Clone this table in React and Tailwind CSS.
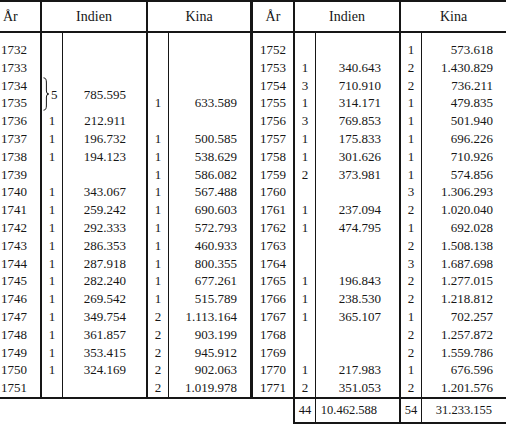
import React from "react";

// [year, indienCount, indienValue, kinaCount, kinaValue]
// null = cell covered by the brace row above
const left = [
  ["1732", "", "", "", ""],
  ["1733", "", "", "", ""],
  ["1734", "5", "785.595", "", ""],
  ["1735", null, null, "1", "633.589"],
  ["1736", "1", "212.911", "", ""],
  ["1737", "1", "196.732", "1", "500.585"],
  ["1738", "1", "194.123", "1", "538.629"],
  ["1739", "", "", "1", "586.082"],
  ["1740", "1", "343.067", "1", "567.488"],
  ["1741", "1", "259.242", "1", "690.603"],
  ["1742", "1", "292.333", "1", "572.793"],
  ["1743", "1", "286.353", "1", "460.933"],
  ["1744", "1", "287.918", "1", "800.355"],
  ["1745", "1", "282.240", "1", "677.261"],
  ["1746", "1", "269.542", "1", "515.789"],
  ["1747", "1", "349.754", "2", "1.113.164"],
  ["1748", "1", "361.857", "2", "903.199"],
  ["1749", "1", "353.415", "2", "945.912"],
  ["1750", "1", "324.169", "2", "902.063"],
  ["1751", "", "", "2", "1.019.978"],
];

const right = [
  ["1752", "", "", "1", "573.618"],
  ["1753", "1", "340.643", "2", "1.430.829"],
  ["1754", "3", "710.910", "2", "736.211"],
  ["1755", "1", "314.171", "1", "479.835"],
  ["1756", "3", "769.853", "1", "501.940"],
  ["1757", "1", "175.833", "1", "696.226"],
  ["1758", "1", "301.626", "1", "710.926"],
  ["1759", "2", "373.981", "1", "574.856"],
  ["1760", "", "", "3", "1.306.293"],
  ["1761", "1", "237.094", "2", "1.020.040"],
  ["1762", "1", "474.795", "1", "692.028"],
  ["1763", "", "", "2", "1.508.138"],
  ["1764", "", "", "3", "1.687.698"],
  ["1765", "1", "196.843", "2", "1.277.015"],
  ["1766", "1", "238.530", "2", "1.218.812"],
  ["1767", "1", "365.107", "1", "702.257"],
  ["1768", "", "", "2", "1.257.872"],
  ["1769", "", "", "2", "1.559.786"],
  ["1770", "1", "217.983", "1", "676.596"],
  ["1771", "2", "351.053", "2", "1.201.576"],
];

const Brace = () => (
  <svg width="6" height="34" viewBox="0 0 6 34" className="shrink-0">
    <path
      d="M0.5 0.8 Q3.6 0.8 3.4 6 L3.4 14 Q3.4 17 5.8 17 Q3.4 17 3.4 20 L3.4 28 Q3.6 33.2 0.5 33.2"
      fill="none"
      stroke="currentColor"
      strokeWidth="1"
    />
  </svg>
);

function Col({ rows, idx, className, cellClass }) {
  return (
    <div className={`pt-[8px] ${className}`}>
      {rows.map((r, i) => {
        const v = r[idx];
        if (v === null) return null;
        const tall = (idx === 1 || idx === 2) && rows[i + 1] && rows[i + 1][idx] === null;
        if (tall && idx === 1) {
          return (
            <div key={i} className="h-[35.6px] flex items-center pl-[1px] gap-[2px]">
              <Brace />
              <span>{v}</span>
            </div>
          );
        }
        return (
          <div
            key={i}
            className={`${tall ? "h-[35.6px] leading-[35.6px]" : "h-[17.8px] leading-[17.8px]"} whitespace-nowrap ${cellClass}`}
          >
            {v}
          </div>
        );
      })}
    </div>
  );
}

export default function App() {
  return (
    <div className="w-[506px] h-[425px] bg-white text-[#161616] font-['Liberation_Serif',serif] overflow-hidden">
      <div className="flex h-[33px] border-t-2 border-b-2 text-[14px] leading-[29px]">
        <div className="w-[42px] border-r-2 pl-[3px]">År</div>
        <div className="w-[106px] border-r-2 text-center">Indien</div>
        <div className="w-[105px] border-r-[3px] text-center">Kina</div>
        <div className="w-[42px] border-r-2 text-center">År</div>
        <div className="w-[106px] border-r-2 text-center">Indien</div>
        <div className="flex-1 text-center">Kina</div>
      </div>

      <div className="flex h-[366px] border-b-2 text-[13px]">
        <Col rows={left} idx={0} className="w-[42px] border-r-2" cellClass="pl-[1px]" />
        <Col rows={left} idx={1} className="w-[21px] border-r" cellClass="text-center" />
        <Col rows={left} idx={2} className="w-[85px] border-r-2" cellClass="text-right pr-[20px]" />
        <Col rows={left} idx={3} className="w-[21px] border-r" cellClass="text-center" />
        <Col rows={left} idx={4} className="w-[84px] border-r-[3px]" cellClass="text-right pr-[13px]" />

        <Col rows={right} idx={0} className="w-[42px] border-r-2" cellClass="text-center" />
        <Col rows={right} idx={1} className="w-[21px] border-r" cellClass="text-center" />
        <Col rows={right} idx={2} className="w-[85px] border-r-2" cellClass="text-right pr-[18px]" />
        <Col rows={right} idx={3} className="w-[21px] border-r" cellClass="text-center" />
        <Col rows={right} idx={4} className="flex-1" cellClass="text-right pr-[13px]" />
      </div>

      <div className="flex text-[12.5px]">
        <div className="w-[293px]" />
        <div className="flex flex-1 h-[25px] border-l-2 border-b-2 leading-[23px] whitespace-nowrap">
          <div className="w-[21px] border-r text-center">44</div>
          <div className="w-[85px] border-r-2 text-right pr-[22px]">10.462.588</div>
          <div className="w-[21px] border-r text-center">54</div>
          <div className="flex-1 text-right pr-[14px]">31.233.155</div>
        </div>
      </div>
    </div>
  );
}
